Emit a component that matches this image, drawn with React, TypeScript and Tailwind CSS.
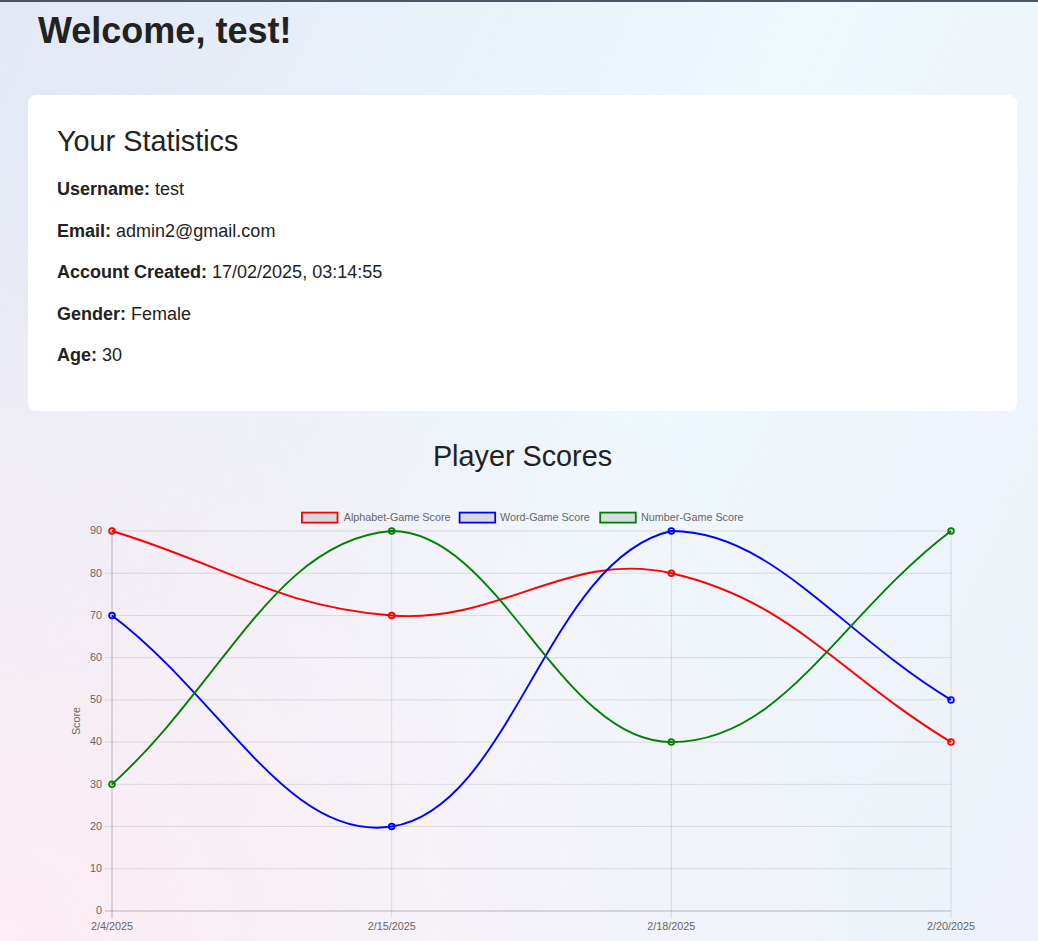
import React from 'react';

type Pt = { x: number; y: number };

const labels = ['2/4/2025', '2/15/2025', '2/18/2025', '2/20/2025'];

const datasets = [
  { label: 'Alphabet-Game Score', color: '#ff0000', data: [90, 70, 80, 40] },
  { label: 'Word-Game Score', color: '#0000ff', data: [70, 20, 90, 50] },
  { label: 'Number-Game Score', color: '#008000', data: [30, 90, 40, 90] },
];

// plot area inside the svg
const X0 = 49;
const X1 = 888;
const YTOP = 35;
const YBOT = 415;

const xAt = (i: number) => X0 + ((X1 - X0) / (labels.length - 1)) * i;
const yAt = (v: number) => YBOT - ((YBOT - YTOP) * v) / 90;

const cap = (p: Pt): Pt => ({
  x: Math.min(Math.max(p.x, X0), X1),
  y: Math.min(Math.max(p.y, YTOP), YBOT),
});

// same spline as chart.js (tension 0.4)
function curvePath(values: number[]) {
  const pts = values.map((v, i) => ({ x: xAt(i), y: yAt(v) }));
  const t = 0.4;
  const cps = pts.map((mid, i) => {
    const prev = pts[i - 1] || mid;
    const next = pts[i + 1] || mid;
    const d01 = Math.hypot(mid.x - prev.x, mid.y - prev.y);
    const d12 = Math.hypot(next.x - mid.x, next.y - mid.y);
    let s01 = d01 / (d01 + d12);
    let s12 = d12 / (d01 + d12);
    if (isNaN(s01)) s01 = 0;
    if (isNaN(s12)) s12 = 0;
    const fa = t * s01;
    const fb = t * s12;
    return {
      prev: cap({ x: mid.x - fa * (next.x - prev.x), y: mid.y - fa * (next.y - prev.y) }),
      next: cap({ x: mid.x + fb * (next.x - prev.x), y: mid.y + fb * (next.y - prev.y) }),
    };
  });
  let d = `M${pts[0].x},${pts[0].y}`;
  for (let i = 1; i < pts.length; i++) {
    const a = cps[i - 1].next;
    const b = cps[i].prev;
    d += ` C${a.x},${a.y} ${b.x},${b.y} ${pts[i].x},${pts[i].y}`;
  }
  return { d, pts };
}

const legend = [
  { box: 238.9, text: 280.7 },
  { box: 396.6, text: 437 },
  { box: 537.2, text: 578 },
];

function ScoresChart() {
  const ticks = [0, 10, 20, 30, 40, 50, 60, 70, 80, 90];
  return (
    <svg width="920" height="445" className="block" style={{ fontFamily: "'Liberation Sans', Arial, sans-serif" }}>
      {/* Legend */}
      {datasets.map((ds, i) => (
        <g key={ds.label}>
          <rect x={legend[i].box} y={16.6} width={35.6} height={10} fill="rgba(0,0,0,0.1)" stroke={ds.color} strokeWidth={1.8} />
          <text x={legend[i].text} y={21.9} fontSize={10.8} fill="#666" dominantBaseline="middle">
            {ds.label}
          </text>
        </g>
      ))}

      {/* Grid */}
      {ticks.map((v) => (
        <g key={v}>
          <line x1={42} x2={X1} y1={yAt(v)} y2={yAt(v)} stroke="rgba(0,0,0,0.1)" strokeWidth={1} />
          <text x={39} y={yAt(v) + 0.5} fontSize={10.8} fill="#666" textAnchor="end" dominantBaseline="middle">
            {v}
          </text>
        </g>
      ))}
      {labels.map((l, i) => (
        <g key={l}>
          <line x1={xAt(i)} x2={xAt(i)} y1={YTOP} y2={YBOT + 7} stroke="rgba(0,0,0,0.1)" strokeWidth={1} />
          <text x={xAt(i)} y={431} fontSize={10.8} fill="#666" textAnchor="middle" dominantBaseline="middle">
            {l}
          </text>
        </g>
      ))}
      <line x1={X0} x2={X0} y1={YTOP} y2={YBOT + 7} stroke="rgba(0,0,0,0.15)" strokeWidth={1} />
      <line x1={42} x2={X1} y1={YBOT} y2={YBOT} stroke="rgba(0,0,0,0.15)" strokeWidth={1} />

      <text
        x={14}
        y={225}
        fontSize={10.8}
        fill="#666"
        textAnchor="middle"
        dominantBaseline="middle"
        transform="rotate(-90 14 225)"
      >
        Score
      </text>

      {/* Lines */}
      {datasets.map((ds) => {
        const { d, pts } = curvePath(ds.data);
        return (
          <g key={ds.label}>
            <path d={d} fill="none" stroke={ds.color} strokeWidth={1.9} />
            {pts.map((p, i) => (
              <circle key={i} cx={p.x} cy={p.y} r={2.9} fill="rgba(0,0,0,0.1)" stroke={ds.color} strokeWidth={1.7} />
            ))}
          </g>
        );
      })}
    </svg>
  );
}

const stats = [
  { label: 'Username:', value: 'test' },
  { label: 'Email:', value: 'admin2@gmail.com' },
  { label: 'Account Created:', value: '17/02/2025, 03:14:55' },
  { label: 'Gender:', value: 'Female' },
  { label: 'Age:', value: '30' },
];

export default function App() {
  return (
    <div className="min-h-screen border-t-2 border-[#4b5563] bg-[radial-gradient(ellipse_at_0%_100%,#fdedf4_0%,rgba(253,237,244,0)_60%),linear-gradient(115deg,#e3e8f4_0%,#eef8fd_55%,#eef1f9_100%)] font-['Liberation_Sans',Arial,sans-serif] text-[#222]">
      <div className="pl-[28px] pr-[21px]">
        <h1 className="mt-[8px] mb-[44px] pl-[10px] text-[36px] leading-[41px] font-bold">Welcome, test!</h1>

        {/* Statistics card */}
        <div className="rounded-lg bg-white pl-[29px] pr-[29px] pt-[30px] pb-[44px]">
          <h2 className="mb-[20px] text-[28.8px] leading-[32px] font-normal">Your Statistics</h2>
          <div className="flex flex-col gap-[17.5px]">
            {stats.map((s) => (
              <p key={s.label} className="text-[18px] leading-[24px]">
                <span className="font-bold">{s.label}</span> {s.value}
              </p>
            ))}
          </div>
        </div>

        {/* Chart */}
        <h2 className="mt-[29px] mb-[24px] text-center text-[28.8px] leading-[32px] font-normal">Player Scores</h2>
        <div className="flex justify-center">
          <ScoresChart />
        </div>
      </div>
    </div>
  );
}
